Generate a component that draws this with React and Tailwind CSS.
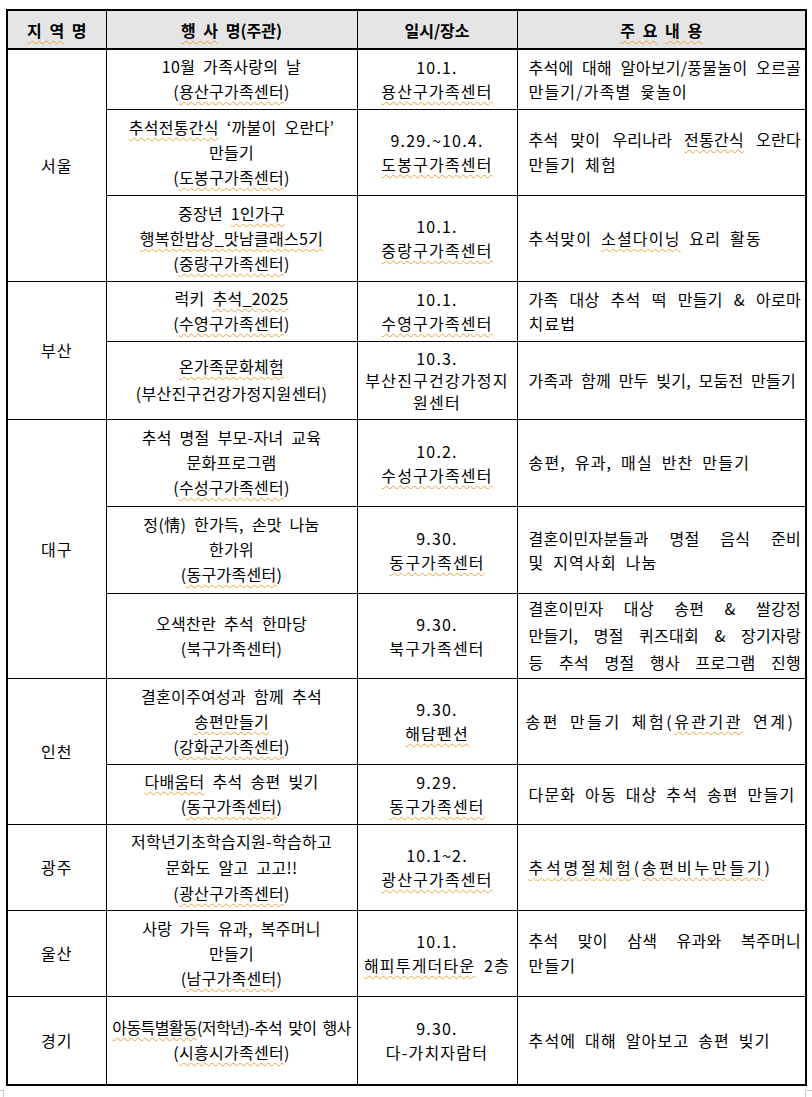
import React from "react";

const U = "underline decoration-wavy decoration-[#f0a03c] decoration-1 underline-offset-[3px]";

const J = (t) => ({ t, j: true });

const regions = [
  {
    name: "서울",
    items: [
      {
        h: "h-[60px]",
        event: ["10월 가족사랑의 날", "({용산구가족센터})"],
        place: ["10.1.", "{용산구가족센터}"],
        detail: [J("추석에 대해 알아보기/풍물놀이 오르골"), "만들기/가족별 윷놀이"],
        lh: "leading-[24px]",
      },
      {
        h: "h-[86px]",
        event: ["{추석전통간식} ‘까불이 오란다’", "만들기", "({도봉구가족센터})"],
        place: ["9.29.~10.4.", "{도봉구가족센터}"],
        detail: [J("추석 맞이 우리나라 {전통간식} 오란다"), "만들기 체험"],
      },
      {
        h: "h-[86px]",
        event: ["중장년 {1인가구}", "{행복한밥상_맛남클래스5기}", "({중랑구가족센터})"],
        place: ["10.1.", "{중랑구가족센터}"],
        detail: ["추석맞이 {소셜다이닝} 요리 활동"],
      },
    ],
  },
  {
    name: "부산",
    items: [
      {
        h: "h-[60px]",
        event: ["럭키 {추석_2025}", "({수영구가족센터})"],
        place: ["10.1.", "{수영구가족센터}"],
        detail: [J("가족 대상 추석 떡 만들기 & 아로마"), "치료법"],
        lh: "leading-[24px]",
      },
      {
        h: "h-[78px]",
        event: ["{온가족문화체험}", "(부산진구건강가정지원센터)"],
        eventLh: "leading-[27px]",
        place: ["10.3.", "부산진구건강가정지", "원센터"],
        placeLh: "leading-[22px]",
        detail: [{ t: "가족과 함께 만두 빚기, 모둠전 만들기", cls: "whitespace-nowrap tracking-[0.2px]" }],
      },
    ],
  },
  {
    name: "대구",
    items: [
      {
        h: "h-[87px]",
        event: ["추석 명절 부모-자녀 교육", "문화프로그램", "({수성구가족센터})"],
        place: ["10.2.", "{수성구가족센터}"],
        detail: ["송편, 유과, 매실 반찬 만들기"],
      },
      {
        h: "h-[87px]",
        event: ["정(情) 한가득, 손맛 나눔", "한가위", "({동구가족센터})"],
        place: ["9.30.", "{동구가족센터}"],
        detail: [J("결혼이민자분들과 명절 음식 준비"), "및 지역사회 나눔"],
        lh: "leading-[24px]",
      },
      {
        h: "h-[85px]",
        event: ["오색찬란 추석 한마당", "(북구가족센터)"],
        place: ["9.30.", "북구가족센터"],
        detail: [
          J("결혼이민자 대상 송편 & 쌀강정"),
          J("만들기, 명절 퀴즈대회 & 장기자랑"),
          J("등 추석 명절 행사 프로그램 진행"),
        ],
        lh: "leading-[27px]",
      },
    ],
  },
  {
    name: "인천",
    items: [
      {
        h: "h-[86px]",
        event: ["결혼이주여성과 함께 추석", "{송편만들기}", "({강화군가족센터})"],
        place: ["9.30.", "{해담펜션}"],
        detail: [{ t: "송편 만들기 체험({유관기관} 연계)", cls: "whitespace-nowrap tracking-[2.5px]" }],
        detailPad: "pl-[8px]",
      },
      {
        h: "h-[60px]",
        event: ["{다배움터} 추석 송편 빚기", "({동구가족센터})"],
        place: ["9.29.", "{동구가족센터}"],
        detail: ["다문화 아동 대상 추석 송편 만들기"],
      },
    ],
  },
  {
    name: "광주",
    items: [
      {
        h: "h-[86px]",
        event: ["저학년기초학습지원-학습하고", "문화도 알고 고고!!", "({광산구가족센터})"],
        eventLh: "leading-[26px]",
        place: ["10.1~2.", "{광산구가족센터}"],
        detail: [{ t: "{추석명절체험}({송편비누만들기})", cls: "whitespace-nowrap tracking-[2.8px]" }],
      },
    ],
  },
  {
    name: "울산",
    items: [
      {
        h: "h-[86px]",
        event: ["사랑 가득 유과, 복주머니", "만들기", "({남구가족센터})"],
        place: ["10.1.", "{해피투게더타운} 2층"],
        detail: [J("추석 맞이 삼색 유과와 복주머니"), "만들기"],
      },
    ],
  },
  {
    name: "경기",
    items: [
      {
        h: "h-[89px]",
        event: [
          {
            t: "{아동특별활동}(저학년)-추석 맞이 행사",
            cls: "whitespace-nowrap tracking-[-0.6px] [word-spacing:3px] -mx-[4px]",
          },
          "({시흥시가족센터})",
        ],
        place: ["9.30.", "다-가치자람터"],
        detail: ["추석에 대해 알아보고 송편 빚기"],
      },
    ],
  },
];

function Marked({ text }) {
  const parts = text.split(/(\{[^}]+\})/);
  return parts.map((p, i) =>
    p.startsWith("{") ? (
      <span key={i} className={U}>
        {p.slice(1, -1)}
      </span>
    ) : (
      <React.Fragment key={i}>{p}</React.Fragment>
    )
  );
}

function Lines({ lines }) {
  return lines.map((line, i) => {
    const l = typeof line === "string" ? { t: line } : line;
    let cls = "whitespace-nowrap";
    if (l.j) cls = "text-justify [text-align-last:justify] [word-spacing:0px] tracking-[0.3px]";
    if (l.cls) cls = l.cls;
    return (
      <div key={i} className={cls}>
        <Marked text={l.t} />
      </div>
    );
  });
}

export default function App() {
  const cell = "border border-black align-middle";
  return (
    <div className="w-[812px] h-[1097px] bg-white text-black font-['Noto_Sans_CJK_KR','Noto_Sans',sans-serif] [word-spacing:4px]">
      <div className="pt-[9px] pl-[6px]">
        <table className="w-[799px] table-fixed border-collapse border-2 border-black">
          <colgroup>
            <col className="w-[99px]" />
            <col className="w-[251px]" />
            <col className="w-[160px]" />
            <col className="w-[289px]" />
          </colgroup>
          <thead>
            <tr className="h-[39px] bg-[#e5e5e5] text-[16px] font-bold">
              <th className={`${cell} border-b-2`}>
                <Marked text="{지 역} 명" />
              </th>
              <th className={`${cell} border-b-2`}>
                <Marked text="{행 사} 명(주관)" />
              </th>
              <th className={`${cell} border-b-2`}>일시/장소</th>
              <th className={`${cell} border-b-2`}>
                <Marked text="{주 요} {내 용}" />
              </th>
            </tr>
          </thead>
          <tbody>
            {regions.map((r) =>
              r.items.map((it, idx) => (
                <tr key={r.name + idx} className={it.h}>
                  {idx === 0 && (
                    <td rowSpan={r.items.length} className={`${cell} text-center text-[16px] tracking-[1px]`}>
                      {r.name}
                    </td>
                  )}
                  <td
                    className={`${cell} text-center text-[16px] tracking-[0.3px] ${it.eventLh || "leading-[25px]"}`}
                  >
                    <Lines lines={it.event} />
                  </td>
                  <td
                    className={`${cell} text-center text-[16px] tracking-[1.2px] ${it.placeLh || "leading-[24px]"}`}
                  >
                    <Lines lines={it.place} />
                  </td>
                  <td
                    className={`${cell} text-left text-[16px] tracking-[1.2px] pr-[4px] ${
                      it.detailPad || "pl-[11px]"
                    } ${it.lh || "leading-[25px]"}`}
                  >
                    <Lines lines={it.detail} />
                  </td>
                </tr>
              ))
            )}
          </tbody>
        </table>
        <div className="flex justify-between -ml-[6px] mt-[4px]">
          <div className="w-[4px] h-[9px] border-t border-r border-[#c8c8c8]" />
          <div className="w-[7px] h-[9px] border-t border-l border-[#c8c8c8]" />
        </div>
      </div>
    </div>
  );
}
